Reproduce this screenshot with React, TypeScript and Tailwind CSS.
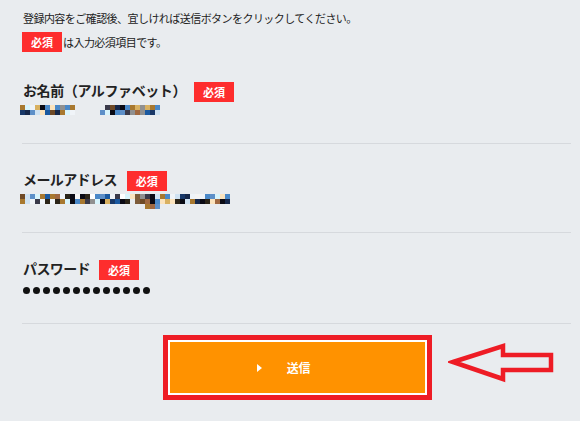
import React from 'react';

const palette = [
  '#eef3f8', '#7d5c3a', '#a8782f', '#16284a', '#ffffff', '#cfe2f2', '#6f4a26', '#2b2418',
  '#5d8fc8', '#1a59a0', '#0a0a14', '#d8b060', '#f0f4f8', '#d8f4fc', '#909090', '#4a88c8',
  '#fbe3bd', '#3a3a4a', '#e8ecef', '#a06840', '#183868', '#f4f4f4',
];

function mosaic(seed: number, count: number) {
  const out: string[] = [];
  let s = seed;
  for (let i = 0; i < count; i++) {
    s = (s * 9301 + 49297) % 233280;
    out.push(palette[s % palette.length]);
  }
  return out;
}

function Pixels({ seed, count }: { seed: number; count: number }) {
  return (
    <div className="flex">
      {mosaic(seed, count).map((c, i) => (
        <div key={i} className="w-[5px] h-[5px]" style={{ backgroundColor: c }} />
      ))}
    </div>
  );
}

function Required() {
  return (
    <span className="inline-flex w-[40px] h-[20px] items-center justify-center bg-[#fe2d2d] text-white text-[11px] font-bold leading-none">
      必須
    </span>
  );
}

export default function App() {
  return (
    <div
      className="w-[580px] h-[421px] bg-[#e9ecef] overflow-hidden text-[#222]"
      style={{ fontFamily: '"Noto Sans CJK JP", "Noto Sans", sans-serif' }}
    >
      <div className="pl-[22px] pr-[9px]">
        <p className="pt-[11px] h-[32px] pl-px text-[11px] leading-[14px] tracking-[-0.55px]">
          登録内容をご確認後、宜しければ送信ボタンをクリックしてください。
        </p>
        <div className="flex items-center h-[20px]">
          <Required />
          <span className="ml-[1px] text-[11px] tracking-[-0.55px]">は入力必須項目です。</span>
        </div>

        {/* name */}
        <div className="pt-[28px] h-[92px] border-b border-[#d6d9dd]">
          <div className="flex items-center h-[20px] pl-px">
            <span className="text-[14px] font-bold tracking-[-0.4px]">お名前（アルファベット）</span>
            <span className="ml-[8px]"><Required /></span>
          </div>
          <div className="mt-[5px] flex gap-[25px] -ml-[2px]">
            <div>
              <Pixels seed={3} count={11} />
              <Pixels seed={17} count={11} />
            </div>
            <div>
              <Pixels seed={41} count={12} />
              <Pixels seed={77} count={12} />
            </div>
          </div>
        </div>

        {/* mail */}
        <div className="pt-[25px] h-[89px] border-b border-[#d6d9dd]">
          <div className="flex items-center h-[20px] pl-px">
            <span className="text-[14px] font-bold tracking-[-0.6px]">メールアドレス</span>
            <span className="ml-[10px]"><Required /></span>
          </div>
          <div className="mt-[5px] -ml-[2px]">
            <Pixels seed={101} count={42} />
            <Pixels seed={233} count={42} />
            <div className="pl-[125px]">
              <Pixels seed={59} count={3} />
            </div>
          </div>
        </div>

        {/* password */}
        <div className="pt-[25px] h-[91px] border-b border-[#d6d9dd]">
          <div className="flex items-center h-[20px] pl-px">
            <span className="text-[14px] font-bold tracking-[-0.6px]">パスワード</span>
            <span className="ml-[9px]"><Required /></span>
          </div>
          <div className="mt-[9px] flex gap-[3px] pl-[1px]">
            {Array.from({ length: 13 }).map((_, i) => (
              <div key={i} className="w-[7px] h-[7px] rounded-full bg-[#111]" />
            ))}
          </div>
        </div>

        <div className="relative mt-[11px] flex justify-center pl-[2px]">
          <div className="w-[269px] h-[65px] border-[5px] border-[#ee1c25] bg-[#f4f6f8] p-0">
            <button className="w-full h-full flex items-center justify-center pr-[28px] border-2 border-white bg-[#ff9200] text-white text-[12px] font-bold">
              <svg width="6" height="8" viewBox="0 0 6 8" className="mr-[24px]">
                <polygon points="0,0 5,4 0,8" fill="#fff" />
              </svg>
              <span className="tracking-[-0.3px]">送信</span>
            </button>
          </div>
          <svg
            className="absolute left-[426px] top-[6px]"
            width="110"
            height="45"
            viewBox="448 342 110 45"
          >
            <polygon
              points="453,363 503,347 503,356 551,356 551,371 503,371 503,380"
              fill="none"
              stroke="#ee1c25"
              strokeWidth="4.5"
              strokeLinejoin="miter"
            />
          </svg>
        </div>
      </div>
    </div>
  );
}
